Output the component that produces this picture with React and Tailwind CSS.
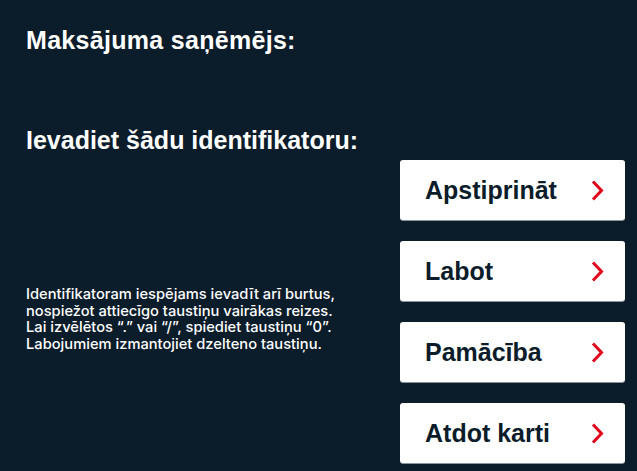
import React from "react";

const buttons = ["Apstiprināt", "Labot", "Pamācība", "Atdot karti"];

function Chevron() {
  return (
    <svg width="13" height="21" viewBox="0 0 13 21" className="shrink-0">
      <polyline points="2,1.5 10.5,10.5 2,19.5" fill="none" stroke="#e3001b" strokeWidth="3" strokeLinejoin="miter" strokeLinecap="butt" />
    </svg>
  );
}

export default function App() {
  return (
    <div
      className="w-[637px] h-[471px] bg-[#0b1c2a] text-white overflow-hidden flex flex-col"
      style={{ fontFamily: '"Liberation Sans", Arial, sans-serif' }}
    >
      <h1 className="mt-[26px] ml-[26px] text-[25px] leading-[28px] font-bold tracking-[0.3px]">
        Maksājuma saņēmējs:
      </h1>
      <h2 className="mt-[72px] ml-[26px] text-[25px] leading-[28px] font-bold">
        Ievadiet šādu identifikatoru:
      </h2>
      <div className="mt-[6px] flex flex-row">
        <div className="flex-1 pl-[26px] pt-[126px]">
          <p
            className="text-[14.7px] leading-[16.6px] font-medium"
            style={{ fontFamily: 'Inter, "Liberation Sans", sans-serif' }}
          >
            Identifikatoram iespējams ievadīt arī burtus,
            <br />
            nospiežot attiecīgo taustiņu vairākas reizes.
            <br />
            Lai izvēlētos “.” vai “/”, spiediet taustiņu “0”.
            <br />
            Labojumiem izmantojiet dzelteno taustiņu.
          </p>
        </div>
        <div className="w-[225px] mr-[12px] flex flex-col gap-[21px]">
          {buttons.map((b) => (
            <div
              key={b}
              className="h-[60px] bg-white rounded-[3px] flex items-center justify-between pl-[25px] pr-[21px] shadow-[0_1px_0_#8a949c]"
            >
              <span className="text-[25px] font-bold text-[#0b1c2a] leading-none">{b}</span>
              <Chevron />
            </div>
          ))}
        </div>
      </div>
    </div>
  );
}
